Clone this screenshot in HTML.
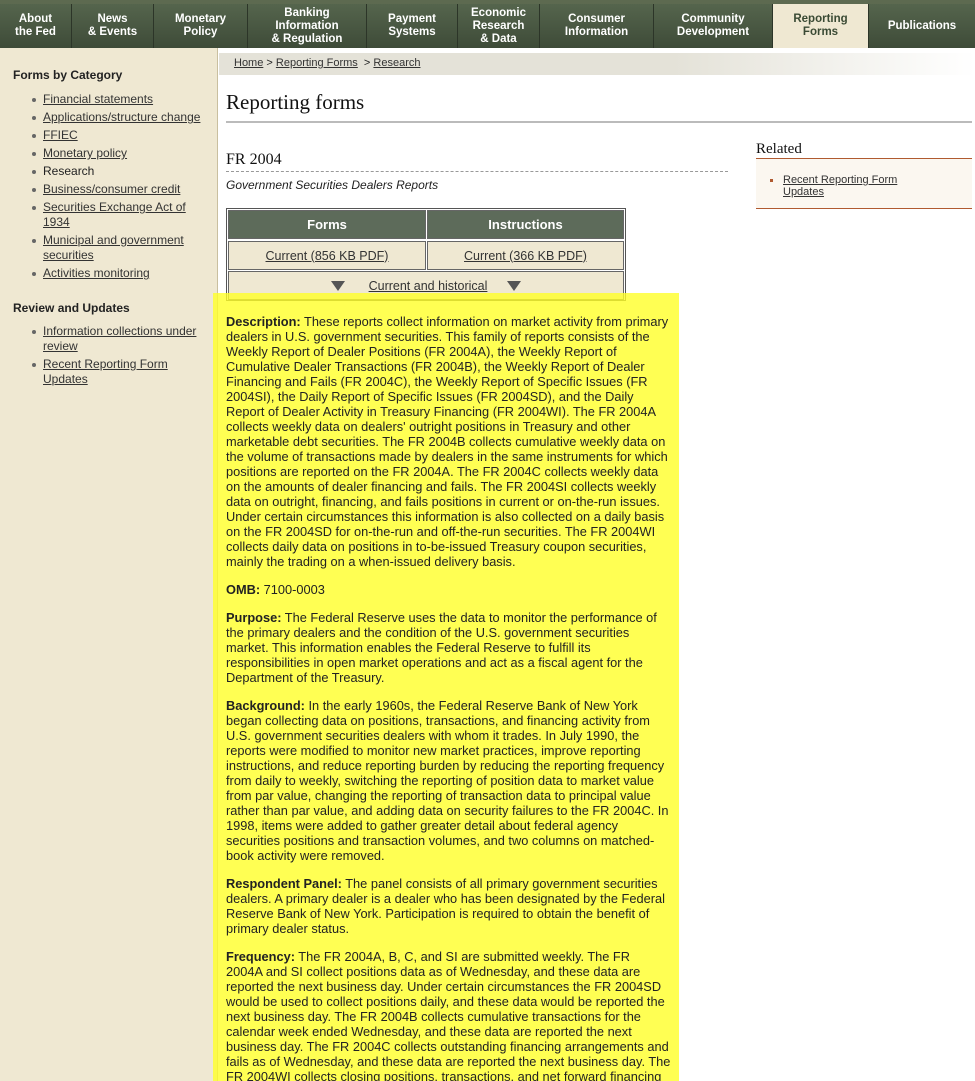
<!DOCTYPE html>
<html><head><meta charset="utf-8"><style>
*{margin:0;padding:0;box-sizing:border-box}
html,body{width:975px;height:1081px;overflow:hidden}
body{background:#fff;font-family:"Liberation Sans",Arial,sans-serif;position:relative;color:#222}
a{color:#333;text-decoration:underline}
#top{position:absolute;left:0;top:0;width:975px;height:4px;background:#5d6a50}
#nav{position:absolute;left:0;top:4px;width:975px;height:44px;background:linear-gradient(#55654d,#3e4b38)}
#nav div{position:absolute;top:0;height:44px;display:flex;align-items:center;justify-content:center;text-align:center;color:#fff;font-family:"Liberation Sans Narrow","Liberation Sans",sans-serif;font-weight:bold;font-size:11.5px;line-height:13px;border-right:1px solid #2c3528}
#nav div.act{background:#efe8d2;color:#3a4a34}
#side{position:absolute;left:0;top:48px;width:218px;height:1033px;background:#efe8d2;border-right:1px solid #c9bf9f}
#side h4{position:absolute;left:13px;font-size:12px;font-weight:bold;color:#222}
#side ul{position:absolute;left:43px;list-style:none;font-size:12px;line-height:15px;width:160px}
#side li{position:relative;margin-bottom:3px}
#side li:before{content:"";position:absolute;left:-11px;top:6px;width:4px;height:4px;border-radius:50%;background:#666}
#crumb{position:absolute;left:219px;top:53px;width:756px;height:22px;background:linear-gradient(90deg,#e4e2d8 60%,#fff);font-size:11px;padding:4px 0 0 15px}
#title{position:absolute;left:226px;top:90px;font-family:"Liberation Serif",serif;font-size:21px;color:#111}
#hr{position:absolute;left:226px;top:121px;width:746px;height:2px;background:#bbb}
#fr{position:absolute;left:226px;top:151px;font-family:"Liberation Serif",serif;font-size:16px;color:#111}
#dash{position:absolute;left:226px;top:171px;width:502px;border-top:1px dashed #999}
#sub{position:absolute;left:226px;top:178px;font-style:italic;font-size:12px}
#tbl{position:absolute;left:226px;top:208px;width:400px;height:93px;border:1px solid #555;background:#fff}
.c{position:absolute;display:flex;align-items:center;justify-content:center;font-size:12.5px;border:1px solid #666}
.h{background:#5d6b5a;color:#fff;font-weight:bold;font-size:13px}
.r{background:#efe8d2}
.tri{display:inline-block;width:0;height:0;border-left:7px solid transparent;border-right:7px solid transparent;border-top:10px solid #555}
#rel{position:absolute;left:756px;top:141px;font-family:"Liberation Serif",serif;font-size:15px;color:#111}
#relbox{position:absolute;left:756px;top:158px;width:216px;height:51px;background:#fbf7f0;border-top:1px solid #b05a30;border-bottom:1px solid #b05a30;font-size:11px;line-height:12px;padding:15px 0 0 27px}
#relbox:before{content:"";position:absolute;left:14px;top:20px;width:3px;height:3px;background:#b05a30}
#hl{position:absolute;left:213px;top:293px;width:466px;height:788px;background:rgba(255,255,40,0.8)}
#body{position:absolute;left:226px;top:314px;font-size:12.8px;line-height:15px;white-space:nowrap;color:#222}
#body p{margin-bottom:13px}
</style></head><body>
<div id="top"></div>
<div id="nav">
<div style="left:0;width:72px">About<br>the Fed</div>
<div style="left:72px;width:82px">News<br>&amp; Events</div>
<div style="left:154px;width:94px">Monetary<br>Policy</div>
<div style="left:248px;width:119px">Banking<br>Information<br>&amp; Regulation</div>
<div style="left:367px;width:91px">Payment<br>Systems</div>
<div style="left:458px;width:82px">Economic<br>Research<br>&amp; Data</div>
<div style="left:540px;width:114px">Consumer<br>Information</div>
<div style="left:654px;width:119px">Community<br>Development</div>
<div class="act" style="left:773px;width:96px">Reporting<br>Forms</div>
<div style="left:869px;width:106px;border:0">Publications</div>
</div>
<div id="side">
<h4 style="top:20px">Forms by Category</h4>
<ul style="top:44px">
<li><a>Financial statements</a></li>
<li><a>Applications/structure change</a></li>
<li><a>FFIEC</a></li>
<li><a>Monetary policy</a></li>
<li>Research</li>
<li><a>Business/consumer credit</a></li>
<li><a>Securities Exchange Act of 1934</a></li>
<li><a>Municipal and government securities</a></li>
<li><a>Activities monitoring</a></li>
</ul>
<h4 style="top:253px">Review and Updates</h4>
<ul style="top:276px">
<li><a>Information collections under review</a></li>
<li><a>Recent Reporting Form Updates</a></li>
</ul>
</div>
<div id="crumb"><a>Home</a> &gt; <a>Reporting Forms</a> &nbsp;&gt; <a>Research</a></div>
<div id="title">Reporting forms</div>
<div id="hr"></div>
<div id="fr">FR 2004</div>
<div id="dash"></div>
<div id="sub">Government Securities Dealers Reports</div>
<div id="tbl">
<div class="c h" style="left:1px;top:1px;width:198px;height:29px">Forms</div>
<div class="c h" style="left:200px;top:1px;width:197px;height:29px">Instructions</div>
<div class="c r" style="left:1px;top:32px;width:198px;height:29px"><a>Current (856 KB PDF)</a></div>
<div class="c r" style="left:200px;top:32px;width:197px;height:29px"><a>Current (366 KB PDF)</a></div>
<div class="c r" style="left:1px;top:62px;width:396px;height:29px"><span class="tri" style="margin-right:24px"></span><a>Current and historical</a><span class="tri" style="margin-left:20px"></span></div>
</div>
<div id="rel">Related</div>
<div id="relbox"><a>Recent Reporting Form<br>Updates</a></div>
<div id="hl"></div>
<div id="body">
<p><b>Description:</b> These reports collect information on market activity from primary<br>dealers in U.S. government securities. This family of reports consists of the<br>Weekly Report of Dealer Positions (FR 2004A), the Weekly Report of<br>Cumulative Dealer Transactions (FR 2004B), the Weekly Report of Dealer<br>Financing and Fails (FR 2004C), the Weekly Report of Specific Issues (FR<br>2004SI), the Daily Report of Specific Issues (FR 2004SD), and the Daily<br>Report of Dealer Activity in Treasury Financing (FR 2004WI). The FR 2004A<br>collects weekly data on dealers' outright positions in Treasury and other<br>marketable debt securities. The FR 2004B collects cumulative weekly data on<br>the volume of transactions made by dealers in the same instruments for which<br>positions are reported on the FR 2004A. The FR 2004C collects weekly data<br>on the amounts of dealer financing and fails. The FR 2004SI collects weekly<br>data on outright, financing, and fails positions in current or on-the-run issues.<br>Under certain circumstances this information is also collected on a daily basis<br>on the FR 2004SD for on-the-run and off-the-run securities. The FR 2004WI<br>collects daily data on positions in to-be-issued Treasury coupon securities,<br>mainly the trading on a when-issued delivery basis.</p>
<p><b>OMB:</b> 7100-0003</p>
<p><b>Purpose:</b> The Federal Reserve uses the data to monitor the performance of<br>the primary dealers and the condition of the U.S. government securities<br>market. This information enables the Federal Reserve to fulfill its<br>responsibilities in open market operations and act as a fiscal agent for the<br>Department of the Treasury.</p>
<p><b>Background:</b> In the early 1960s, the Federal Reserve Bank of New York<br>began collecting data on positions, transactions, and financing activity from<br>U.S. government securities dealers with whom it trades. In July 1990, the<br>reports were modified to monitor new market practices, improve reporting<br>instructions, and reduce reporting burden by reducing the reporting frequency<br>from daily to weekly, switching the reporting of position data to market value<br>from par value, changing the reporting of transaction data to principal value<br>rather than par value, and adding data on security failures to the FR 2004C. In<br>1998, items were added to gather greater detail about federal agency<br>securities positions and transaction volumes, and two columns on matched-<br>book activity were removed.</p>
<p><b>Respondent Panel:</b> The panel consists of all primary government securities<br>dealers. A primary dealer is a dealer who has been designated by the Federal<br>Reserve Bank of New York. Participation is required to obtain the benefit of<br>primary dealer status.</p>
<p><b>Frequency:</b> The FR 2004A, B, C, and SI are submitted weekly. The FR<br>2004A and SI collect positions data as of Wednesday, and these data are<br>reported the next business day. Under certain circumstances the FR 2004SD<br>would be used to collect positions daily, and these data would be reported the<br>next business day. The FR 2004B collects cumulative transactions for the<br>calendar week ended Wednesday, and these data are reported the next<br>business day. The FR 2004C collects outstanding financing arrangements and<br>fails as of Wednesday, and these data are reported the next business day. The<br>FR 2004WI collects closing positions, transactions, and net forward financing</p>
</div>
</body></html>
